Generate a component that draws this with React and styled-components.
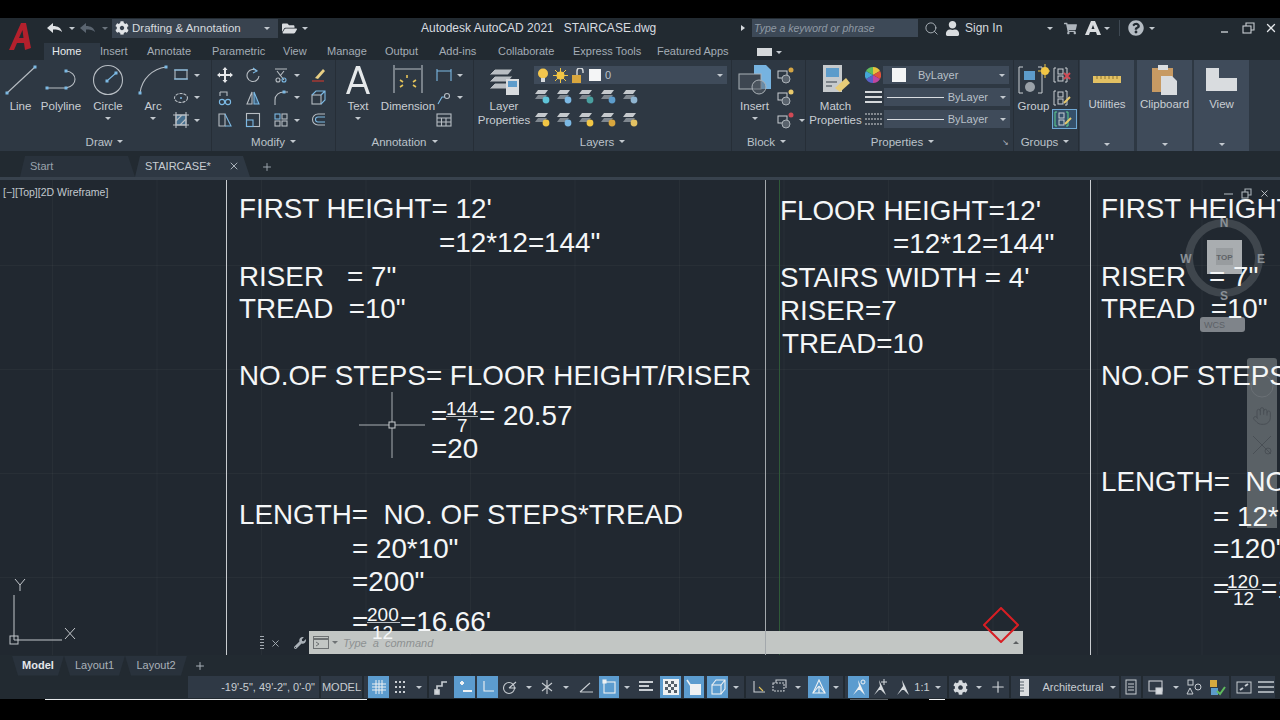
import React from "react";
import styled, { createGlobalStyle } from "styled-components";
import { FaCog, FaUser, FaShoppingCart, FaFolderOpen, FaQuestionCircle, FaWrench } from "react-icons/fa";
import { Search, X, Plus, Hand } from "lucide-react";

const GlobalStyle = createGlobalStyle`
  html, body { margin: 0; padding: 0; background: #000; }
  body { font-family: "Liberation Sans", Arial, sans-serif; width: 1280px; height: 720px; overflow: hidden; }
`;

const Screen = styled.div`
  width: 1280px;
  height: 720px;
  background: #000;
  padding-top: 18px;
  box-sizing: border-box;
  display: flex;
  flex-direction: column;
`;

/* ---- top bars ---- */
const Top = styled.div`
  display: flex;
  height: 42px;
  background: #222a31;
  flex: none;
`;
const LogoBox = styled.div`
  width: 44px;
  flex: none;
  padding: 4px 0 0 8px;
  box-sizing: border-box;
`;
const TopRows = styled.div`
  flex: 1;
  display: flex;
  flex-direction: column;
`;
const TitleRow = styled.div`
  height: 25px;
  padding-bottom: 5px;
  box-sizing: border-box;
  display: flex;
  align-items: center;
  white-space: nowrap;
  color: #d5d9dd;
  font-size: 12px;
`;
const Gap = styled.span`
  display: inline-block;
  flex: none;
  width: ${(p) => p.$w}px;
`;
const Caret = styled.span`
  display: inline-block;
  flex: none;
  width: 0;
  height: 0;
  border-left: 3px solid transparent;
  border-right: 3px solid transparent;
  border-top: 3px solid ${(p) => p.$c || "#c3c9cf"};
`;
const Workspace = styled.div`
  width: 166px;
  height: 19px;
  background: #39434f;
  display: flex;
  align-items: center;
  padding: 0 3px;
  box-sizing: border-box;
  font-size: 11.5px;
  gap: 3px;
  flex: none;
  color: #d6dade;
`;
const Grow = styled.span`
  flex: 1;
`;
const AppTitle = styled.div`
  width: 320px;
  flex: none;
  white-space: pre;
  font-size: 12px;
  color: #d8dce0;
`;
const SearchArrow = styled.span`
  width: 0;
  height: 0;
  flex: none;
  border-top: 3px solid transparent;
  border-bottom: 3px solid transparent;
  border-left: 4px solid #d5d9dd;
`;
const SepLine = styled.span`
  width: 1px;
  height: 16px;
  background: #3f4953;
  flex: none;
`;
const SearchBox = styled.div`
  width: 166px;
  height: 18px;
  background: #3d4957;
  color: #8f99a4;
  font-size: 10.5px;
  font-style: italic;
  line-height: 18px;
  padding-left: 2px;
  box-sizing: border-box;
  flex: none;
`;
const TabsRow = styled.div`
  height: 17px;
  display: flex;
  align-items: flex-end;
`;
const RibbonTab = styled.div`
  height: 17px;
  line-height: 16px;
  font-size: 11px;
  color: ${(p) => (p.$active ? "#e8ebee" : "#a4adb6")};
  background: ${(p) => (p.$active ? "#2e3843" : "transparent")};
  width: ${(p) => p.$w}px;
  padding-left: ${(p) => (p.$active ? 8 : 0)}px;
  box-sizing: border-box;
  flex: none;
`;
const MiniBox = styled.span`
  width: 15px;
  height: 8px;
  background: #d5d8da;
  margin: 0 4px 4px 0;
  flex: none;
`;
const TabCaret = styled(Caret)`
  margin-bottom: 6px;
`;

/* ---- ribbon ---- */
const Ribbon = styled.div`
  display: flex;
  height: 91px;
  background: #2e3843;
  padding-left: 2px;
  flex: none;
`;
const Panel = styled.div`
  width: ${(p) => p.$w}px;
  flex: none;
  display: flex;
  flex-direction: column;
  box-sizing: border-box;
  border-right: 1px solid #262e37;
  position: relative;
`;
const PanelBody = styled.div`
  flex: 1;
  display: flex;
  padding-top: 4px;
`;
const PanelTitle = styled.div`
  height: 18px;
  display: flex;
  align-items: center;
  justify-content: center;
  gap: 5px;
  color: #bcc3ca;
  font-size: 11.5px;
  padding: 0 ${(p) => p.$pr || 0}px 1px 0;
  box-sizing: border-box;
`;
const Launcher = styled.span`
  position: absolute;
  right: 4px;
  bottom: 4px;
  color: #b5bcc3;
  font-size: 8px;
  line-height: 8px;
`;
const BigButton = styled.div`
  width: ${(p) => p.$w}px;
  flex: none;
  display: flex;
  flex-direction: column;
  align-items: center;
  color: #c9ced3;
  font-size: 11.5px;
  line-height: 14px;
  text-align: center;
`;
const BigIcon = styled.div`
  height: 32px;
  margin-bottom: 3px;
  display: flex;
  align-items: center;
  justify-content: center;
`;
const BigCaret = styled(Caret)`
  margin-top: 4px;
`;
const SmallCol = styled.div`
  display: flex;
  flex-direction: column;
  width: ${(p) => p.$w}px;
  flex: none;
`;
const SmallGrid = styled.div`
  display: grid;
  grid-template-columns: ${(p) => p.$cols};
  grid-auto-rows: 22.5px;
  align-items: center;
  justify-items: start;
  flex: none;
`;
const SmallBtn = styled.div`
  display: flex;
  align-items: center;
  gap: 5px;
  height: 22.5px;
`;
const LayerColumn = styled.div`
  display: flex;
  flex-direction: column;
  flex: none;
  width: 193px;
  margin: 2px 0 0 0;
`;
const Combo = styled.div`
  height: 18px;
  background: #3f4b5a;
  display: flex;
  align-items: center;
  padding: 0 4px 0 3px;
  gap: 4px;
  color: #b9c0c8;
  font-size: 11px;
  box-sizing: border-box;
  margin-bottom: ${(p) => p.$mb || 0}px;
  flex: none;
  width: ${(p) => p.$w || "auto"};
`;
const Swatch = styled.span`
  width: ${(p) => p.$s}px;
  height: ${(p) => p.$s}px;
  background: #f4f5f6;
  flex: none;
`;
const LineSample = styled.span`
  flex: 1;
  height: 1px;
  background: #d8dce0;
`;
const PropRows = styled.div`
  display: flex;
  flex-direction: column;
  flex: none;
  padding-top: 2px;
`;
const PropRow = styled.div`
  display: flex;
  align-items: center;
  gap: 2px;
  margin-bottom: 4px;
`;
const PressedIcon = styled.div`
  background: #35506a;
  border: 1px solid #6fa8d4;
  display: flex;
  padding: 1px;
  margin-left: -1px;
`;
const Collapsed = styled.div`
  width: ${(p) => p.$w}px;
  margin-right: ${(p) => p.$mr}px;
  background: #3f4b5a;
  flex: none;
  display: flex;
  flex-direction: column;
  align-items: center;
  color: #c9ced3;
  font-size: 11.5px;
  padding-top: 4px;
  box-sizing: border-box;
`;
const CollapsedIcon = styled.div`
  height: 31px;
  display: flex;
  align-items: center;
  margin-bottom: 3px;
`;
const Bottom6 = styled.span`
  height: 5px;
  flex: none;
`;

/* ---- document tabs ---- */
const DocBar = styled.div`
  height: 29px;
  background: #222a31;
  border-bottom: 3px solid #38424d;
  box-sizing: border-box;
  display: flex;
  align-items: flex-end;
  padding-left: 20px;
  flex: none;
  color: #aab2ba;
  font-size: 11px;
`;
const DocTab = styled.div`
  width: 115px;
  height: 21px;
  flex: none;
  background: ${(p) => (p.$active ? "#2e3843" : "#29323c")};
  color: ${(p) => (p.$active ? "#c9ced3" : "#9aa3ac")};
  clip-path: polygon(5px 0, 108px 0, 115px 100%, 0 100%);
  display: flex;
  align-items: center;
  padding: 0 10px 2px;
  box-sizing: border-box;
  justify-content: space-between;
`;
const DocPlus = styled.div`
  margin: 0 0 4px 11px;
  display: flex;
`;

/* ---- drawing area ---- */
const Canvas = styled.div`
  position: relative;
  height: 475px;
  flex: none;
  overflow: hidden;
  background-color: #212830;
  background-image:
    linear-gradient(90deg, rgba(255, 255, 255, 0.03) 1px, transparent 1px),
    linear-gradient(rgba(255, 255, 255, 0.03) 1px, transparent 1px);
  background-size: 104.5px 104px;
  background-position: 52px 85px;
`;
const Rule = styled.div`
  position: absolute;
  top: 0;
  bottom: 0;
  left: ${(p) => p.$x}px;
  width: 1px;
  background: ${(p) => p.$c};
  z-index: ${(p) => p.$z || 0};
`;
const Note = styled.div`
  position: absolute;
  left: ${(p) => p.$x}px;
  top: ${(p) => p.$y + 1}px;
  transform: translateY(-50%);
  white-space: pre;
  font-size: ${(p) => p.$s || 27.8}px;
  line-height: 1;
  color: #f4f6f7;
  z-index: ${(p) => (p.$over ? 3 : 1)};
`;
const FracBar = styled.div`
  position: absolute;
  left: ${(p) => p.$x}px;
  top: ${(p) => p.$y}px;
  width: ${(p) => p.$w}px;
  height: 1px;
  background: #b9bec2;
`;
const ViewLabel = styled.div`
  position: absolute;
  left: 3px;
  top: 6px;
  color: #c2c8ce;
  font-size: 10.5px;
`;
const Cross = styled.svg`
  position: absolute;
  left: 359px;
  top: 212px;
`;
const Ucs = styled.svg`
  position: absolute;
  left: 8px;
  top: 399px;
`;
const Marker = styled.svg`
  position: absolute;
  left: 983px;
  top: 427px;
  z-index: 4;
`;
const WinControls = styled.div`
  position: absolute;
  top: 8px;
  right: 10px;
  display: flex;
  gap: 7px;
  align-items: center;
  color: #aab1b8;
  z-index: 5;
`;
const Cube = styled.svg`
  position: absolute;
  left: 1176px;
  top: 30px;
`;
const NavBar = styled.div`
  position: absolute;
  left: 1247px;
  top: 178px;
  width: 30px;
  height: 170px;
  background: #5a6166;
  border-radius: 3px 3px 0 0;
  display: flex;
  flex-direction: column;
  align-items: center;
  gap: 8px;
  padding-top: 16px;
  box-sizing: border-box;
  color: #494f55;
`;
const CommandTools = styled.div`
  position: absolute;
  left: 260px;
  top: 451px;
  height: 24px;
  display: flex;
  align-items: center;
  gap: 6px;
  color: #aab1b8;
  z-index: 2;
`;
const Grip = styled.span`
  width: 4px;
  height: 15px;
  background-image: repeating-linear-gradient(#a2a9b0 0 1px, transparent 1px 3px);
`;
const CommandLine = styled.div`
  position: absolute;
  left: 309px;
  top: 451px;
  width: 714px;
  height: 23px;
  background: #c2c6c4;
  display: flex;
  align-items: center;
  padding: 0 4px;
  box-sizing: border-box;
  gap: 3px;
  color: #8d9192;
  font-size: 11px;
  font-style: italic;
  z-index: 2;
`;
const CommandText = styled.span`
  white-space: pre;
  margin-left: 2px;
  flex: 1;
`;
const UpCaret = styled(Caret)`
  transform: rotate(180deg);
`;

/* ---- bottom ---- */
const LayoutBar = styled.div`
  height: 21px;
  background: #222a31;
  display: flex;
  align-items: center;
  padding-left: 12px;
  flex: none;
  font-size: 11px;
  color: #a9b1b9;
`;
const LayoutTab = styled.div`
  width: ${(p) => p.$w}px;
  height: 20px;
  flex: none;
  background: #29323c;
  text-align: center;
  line-height: 19px;
  font-weight: ${(p) => (p.$active ? 700 : 400)};
  color: ${(p) => (p.$active ? "#e4e7ea" : "#a9b1b9")};
  clip-path: polygon(0 0, 100% 0, calc(100% - 6px) 100%, 6px 100%);
`;
const StatusBar = styled.div`
  height: 23px;
  background: #222a31;
  display: flex;
  padding-left: 188px;
  gap: 2px;
  flex: none;
`;
const StatusGroup = styled.div`
  height: 22px;
  background: #2f3945;
  display: flex;
  align-items: center;
  flex: none;
  color: #c8cdd2;
  font-size: 11px;
`;
const Coords = styled(StatusGroup)`
  width: 131px;
  justify-content: flex-end;
  padding-right: 4px;
  box-sizing: border-box;
  white-space: pre;
`;
const StatusText = styled.div`
  width: ${(p) => p.$w}px;
  text-align: center;
  flex: none;
`;
const StatusBtn = styled.div`
  width: ${(p) => p.$w || 21}px;
  height: 22px;
  flex: none;
  display: flex;
  align-items: center;
  justify-content: center;
  background: ${(p) => (p.$on ? "#5c9ccf" : "transparent")};
`;
const BottomEdge = styled.div`
  height: 1px;
  display: flex;
  flex: none;
`;
const EdgeBit = styled.span`
  width: ${(p) => p.$w}px;
  background: ${(p) => p.$c};
  flex: none;
`;

/* ---- icons ---- */
const I = ({ w = 16, h = 16, vb, children, fill = "none", sc = "#b7bdc3", sw = 1.1 }) => (
  <svg width={w} height={h} viewBox={vb || `0 0 ${w} ${h}`} fill={fill} stroke={sc} strokeWidth={sw}>
    {children}
  </svg>
);
const BLUE = "#7cb9e4";
const Dot = ({ x, y }) => <rect x={x - 1.5} y={y - 1.5} width="3" height="3" fill={BLUE} stroke="none" />;

const Logo = () => (
  <svg width="24" height="30" viewBox="0 0 24 30">
    <path d="M1 28 L13 1 L18 1 L23 26 L17 28 L16 21 L9 21 L6 28 Z M11 16 L15.5 16 L14.5 8 Z" fill="#b3202c" fillRule="evenodd" />
  </svg>
);
const Undo = ({ c }) => (
  <svg width="16" height="11" viewBox="0 0 16 11"><path d="M0 5 L6 0 V3 C11 3 14 5 15 9 C13 7 10 6.5 6 6.5 V10 Z" fill={c} /></svg>
);
const TextSmallA = () => (
  <svg width="16" height="14" viewBox="0 0 16 14"><path d="M0 14 L6 0 H10 L16 14 H12 L11 11 H5 L4 14 Z M6.5 8 H9.5 L8 4 Z" fill="#d9dcdf" fillRule="evenodd" /></svg>
);
const LineI = () => <I w={32} h={32}><path d="M2 29 L30 3" /><Dot x={2} y={29} /><Dot x={30} y={3} /></I>;
const PolyI = () => <I w={34} h={24}><path d="M3 20 H22 C34 18 34 4 22 3" /><Dot x={3} y={20} /><Dot x={22} y={20} /><Dot x={22} y={3} /></I>;
const CircleI = () => <I w={32} h={32}><circle cx="16" cy="16" r="14.5" /><path d="M16 16 L24 9" stroke={BLUE} /><Dot x={15} y={17} /><Dot x={24} y={9} /></I>;
const ArcI = () => <I w={32} h={32}><path d="M3 29 C5 14 16 5 29 3" /><Dot x={3} y={29} /><Dot x={29} y={3} /></I>;
const RectI = () => <I><rect x="2" y="3" width="12" height="9" /><path d="M1 3 H15 M1 12 H15" stroke={BLUE} /></I>;
const EllipseI = () => <I><ellipse cx="8" cy="8" rx="6.5" ry="4.5" strokeDasharray="3 1" /><circle cx="8" cy="8" r="1" fill={BLUE} stroke="none" /></I>;
const HatchI = () => <I><rect x="3" y="3" width="10" height="10" fill="#47708f" /><path d="M3 9 L9 3 M7 13 L13 7 M0 3 H16 M0 13 H16 M3 0 V16 M13 0 V16" /></I>;
const MoveI = () => <I sc="#e6e8ea" sw={2}><path d="M8 1 V15 M1 8 H15" /><path d="M8 0 L5.5 3 H10.5Z M8 16 L5.5 13 H10.5Z M0 8 L3 5.5 V10.5Z M16 8 L13 5.5 V10.5Z" fill="#e6e8ea" stroke="none" /></I>;
const RotateI = () => <I><path d="M12 4 A6 6 0 1 0 14 9" /><path d="M8 1 L12 4 L8 6" stroke={BLUE} /></I>;
const TrimI = () => <I><path d="M2 2 H14 M4 4 L11 13 M11 4 L7 9" /><circle cx="5" cy="13" r="2" /><circle cx="11" cy="13" r="2" stroke={BLUE} /></I>;
const EraseI = () => <I><path d="M2 14 H14" stroke="#d0392e" /><path d="M5 11 L13 2 L15 4 L8 12 Z" fill="#e8cf84" stroke="none" /></I>;
const CopyI = () => <I><path d="M3 2 H10 V6 M3 2 V6" /><circle cx="5" cy="12" r="2.6" stroke={BLUE} /><circle cx="11" cy="12" r="2.6" stroke={BLUE} /></I>;
const MirrorI = () => <I><path d="M7 2 L2 14 H7Z" /><path d="M9 2 L14 14 H9Z" stroke={BLUE} fill="#3c5f7c" /></I>;
const FilletI = () => <I><path d="M2 15 V10 C2 5 6 2 11 2 H15" /><Dot x={11} y={2} /></I>;
const BoxI = () => <I><rect x="2" y="5" width="9" height="9" /><path d="M2 5 L6 1 H15 V10 L11 14 M11 5 L15 1" stroke={BLUE} /></I>;
const StretchI = () => <I><path d="M2 2 H8 V14 H2Z" /><path d="M8 2 L14 14 H8" stroke={BLUE} /></I>;
const ScaleI = () => <I><rect x="1.5" y="1.5" width="13" height="13" /><rect x="1.5" y="8" width="6.5" height="6.5" stroke={BLUE} /></I>;
const ArrayI = () => <I><rect x="2" y="2" width="5" height="5" stroke={BLUE} /><rect x="9" y="2" width="5" height="5" /><rect x="2" y="9" width="5" height="5" /><rect x="9" y="9" width="5" height="5" /></I>;
const OffsetI = () => <I><path d="M15 2 H8 A5.5 5.5 0 0 0 8 13 H15" /><path d="M15 5 H8 A2.5 2.5 0 0 0 8 10 H15" stroke={BLUE} /></I>;
const DimLinI = () => <I><path d="M1 2 V14 M15 2 V14 M1 4 H15" stroke={BLUE} /></I>;
const LeaderI = () => <I><path d="M2 14 L6 7 H9" stroke={BLUE} /><circle cx="11" cy="6" r="2.5" /></I>;
const TableI = () => <I><rect x="1" y="2" width="14" height="12" /><path d="M1 6 H15 M1 10 H15 M5.5 6 V14 M10 6 V14" /></I>;
const TextA = () => <svg width="26" height="30" viewBox="0 0 26 30"><path d="M1 29 L11 1 H15 L25 29 H21.5 L19 22 H7 L4.5 29 Z M8 19 H18 L13 5 Z" fill="#e5e8ea" fillRule="evenodd" /></svg>;
const DimI = () => (
  <I w={32} h={32}>
    <path d="M2 1 V29 M30 1 V29 M3 5 H29" />
    <path d="M11 18 L8 16 M15 14 V11 M21 18 L24 16 M8 23 L11 21 M24 23 L21 21" stroke="#e5c45a" strokeWidth="1.6" />
  </I>
);
const LayerStack = () => (
  <svg width="32" height="30" viewBox="0 0 32 30">
    {[4, 11, 18].map((y) => <path key={y} d={`M7 ${y} H25 L20 ${y + 6} H1 Z`} fill="#b9bec3" stroke="#2e3843" />)}
    <rect x="18" y="14" width="13" height="16" fill="#d9dcdf" />
    <rect x="20" y="16" width="9" height="6" fill="#5d9ccb" />
  </svg>
);
const MiniLayer = ({ a, b = "#c5c9cd" }) => (
  <svg width="18" height="16" viewBox="0 0 18 16">
    <path d="M4 1 H14 L11 5 H1Z" fill={b} />
    <path d="M4 6 H13 L10 10 H1Z" fill="#7f878f" />
    <circle cx="12" cy="11" r="3.4" fill={a} />
  </svg>
);
const Bulb = () => <svg width="12" height="15" viewBox="0 0 12 15"><circle cx="6" cy="5.5" r="5" fill="#f4c64d" /><rect x="4" y="10" width="4" height="4" fill="#d5d8db" /></svg>;
const Sun = () => <svg width="15" height="15" viewBox="0 0 15 15"><circle cx="7.5" cy="7.5" r="4" fill="#f2c645" /><path d="M7.5 0 V15 M0 7.5 H15 M2 2 L13 13 M13 2 L2 13" stroke="#f2c645" /></svg>;
const Lock = () => <svg width="13" height="15" viewBox="0 0 13 15"><rect x="0" y="7" width="9" height="8" fill="#d8a63e" /><path d="M5 7 V3 A3 3 0 0 1 11 3 V5" stroke="#d8dadc" strokeWidth="1.4" fill="none" /></svg>;
const InsertI = () => (
  <svg width="34" height="30" viewBox="0 0 34 30">
    <path d="M16 0 H28 L33 5 V24 H16Z" fill="#76b3e0" />
    <rect x="1" y="9" width="22" height="15" fill="#3d4651" stroke="#aab1b7" />
    <circle cx="21" cy="22" r="7" fill="#59626c" stroke="#aab1b7" fillOpacity=".5" />
  </svg>
);
const BlockSmall = ({ c = "#d4a545" }) => (
  <svg width="17" height="17" viewBox="0 0 17 17">
    <rect x="1" y="4" width="9" height="7" fill="none" stroke="#c9ced3" />
    <circle cx="9" cy="12" r="4" fill="#59626c" stroke="#aab1b7" />
    <circle cx="14" cy="3" r="2.5" fill={c} />
  </svg>
);
const MatchI = () => (
  <svg width="32" height="32" viewBox="0 0 32 32">
    <rect x="3" y="1" width="19" height="27" fill="#c6cacd" />
    <rect x="6" y="4" width="13" height="9" fill="#5d9ccb" />
    <path d="M6 18 H17 M6 22 H12" stroke="#656d75" strokeWidth="1.5" />
    <path d="M15 24 L26 14 L30 19 L20 28Z" fill="#e9cd78" />
  </svg>
);
const Wheel = () => (
  <svg width="16" height="16" viewBox="0 0 16 16">
    <path d="M8 8 L8 0 A8 8 0 0 1 15 4Z" fill="#e8c23c" />
    <path d="M8 8 L15 4 A8 8 0 0 1 15 12Z" fill="#e2533b" />
    <path d="M8 8 L15 12 A8 8 0 0 1 8 16Z" fill="#c046a0" />
    <path d="M8 8 L8 16 A8 8 0 0 1 1 12Z" fill="#5a60c8" />
    <path d="M8 8 L1 12 A8 8 0 0 1 1 4Z" fill="#45a6d8" />
    <path d="M8 8 L1 4 A8 8 0 0 1 8 0Z" fill="#5fbb5e" />
  </svg>
);
const Weights = ({ dashed }) => (
  <I w={17} h={16} sc="#d5d8db" sw={dashed ? 1 : 2}>
    <path d="M0 3 H17 M0 8 H17 M0 13 H17" strokeDasharray={dashed ? "2 1" : undefined} />
  </I>
);
const GroupI = () => (
  <svg width="32" height="32" viewBox="0 0 32 32">
    <path d="M5 3 H1 V29 H5 M20 3 H24 V29 H20" stroke="#c9ced3" fill="none" />
    <rect x="6" y="7" width="11" height="9" fill="#5d9ccb" />
    <circle cx="12" cy="23" r="5" fill="#9aa1a8" />
    <circle cx="27" cy="7" r="4" fill="#f2c645" />
    <path d="M27 0 V14 M20 7 H32" stroke="#f2c645" />
  </svg>
);
const Bracket = ({ mark, stroke = "#c9ced3" }) => (
  <svg width="18" height="16" viewBox="0 0 18 16">
    <path d="M3 1 H1 V15 H3 M12 1 H14 V15 H12" stroke={stroke} fill="none" />
    <rect x="5" y="2" width="5" height="5" fill="none" stroke="#c9ced3" />
    <rect x="5" y="9" width="5" height="5" fill="none" stroke="#c9ced3" />
    <path d={mark === "x" ? "M11 6 L17 12 M17 6 L11 12" : "M11 13 L17 7"} stroke={mark === "x" ? "#d04a55" : "#e8c96c"} strokeWidth="2" />
  </svg>
);
const Ruler = () => <svg width="28" height="8" viewBox="0 0 28 8"><rect width="28" height="7" fill="#e3c163" /><path d="M4 0 V3 M8 0 V3 M12 0 V3 M16 0 V3 M20 0 V3 M24 0 V3" stroke="#8d7430" /></svg>;
const Clip = () => (
  <svg width="26" height="30" viewBox="0 0 26 30">
    <rect x="0" y="3" width="21" height="24" fill="#c79a63" />
    <rect x="6" y="0" width="10" height="5" fill="#d9dcdf" />
    <path d="M9 11 H20 L25 16 V30 H9Z" fill="#d9dcdf" />
  </svg>
);
const ViewI = () => <svg width="32" height="24" viewBox="0 0 32 24"><path d="M0 0 H13 V10 H31 V23 H0Z" fill="#d9dcdf" /></svg>;

const SI = ({ children, w = 16, h = 16, sc = "#c8cdd2", sw = 1.1 }) => <I w={w} h={h} sc={sc} sw={sw}>{children}</I>;
const Person = ({ c, extra }) => (
  <svg width="16" height="18" viewBox="0 0 16 18">
    <path d="M7 2 L8 8 L2 17 L7 12 L9 12 L14 17 L10 8Z" fill={c} />
    {extra}
  </svg>
);

const caretGap = <Caret />;

const Draw = () => (
  <Panel $w={210}>
    <PanelBody>
      <BigButton $w={37}><BigIcon><LineI /></BigIcon>Line</BigButton>
      <BigButton $w={44}><BigIcon><PolyI /></BigIcon>Polyline</BigButton>
      <BigButton $w={50}><BigIcon><CircleI /></BigIcon>Circle<BigCaret /></BigButton>
      <BigButton $w={40}><BigIcon><ArcI /></BigIcon>Arc<BigCaret /></BigButton>
      <SmallCol $w={36}>
        <SmallBtn><RectI />{caretGap}</SmallBtn>
        <SmallBtn><EllipseI />{caretGap}</SmallBtn>
        <SmallBtn><HatchI />{caretGap}</SmallBtn>
      </SmallCol>
    </PanelBody>
    <PanelTitle $pr={4}>Draw <Caret /></PanelTitle>
  </Panel>
);

const Modify = () => (
  <Panel $w={124}>
    <PanelBody>
      <Gap $w={5} />
      <SmallGrid $cols="28px 28px 37px 20px">
        <MoveI /><RotateI /><SmallBtn><TrimI />{caretGap}</SmallBtn><EraseI />
        <CopyI /><MirrorI /><SmallBtn><FilletI />{caretGap}</SmallBtn><BoxI />
        <StretchI /><ScaleI /><SmallBtn><ArrayI />{caretGap}</SmallBtn><OffsetI />
      </SmallGrid>
    </PanelBody>
    <PanelTitle>Modify <Caret /></PanelTitle>
  </Panel>
);

const Annotation = () => (
  <Panel $w={138}>
    <PanelBody>
      <BigButton $w={44}><BigIcon><TextA /></BigIcon>Text<BigCaret /></BigButton>
      <BigButton $w={56}><BigIcon><DimI /></BigIcon>Dimension</BigButton>
      <SmallCol $w={30}>
        <SmallBtn><DimLinI />{caretGap}</SmallBtn>
        <SmallBtn><LeaderI />{caretGap}</SmallBtn>
        <SmallBtn><TableI /></SmallBtn>
      </SmallCol>
    </PanelBody>
    <PanelTitle>Annotation <Caret /></PanelTitle>
  </Panel>
);

const Layers = () => (
  <Panel $w={258}>
    <PanelBody>
      <BigButton $w={60}><BigIcon><LayerStack /></BigIcon>Layer<br />Properties</BigButton>
      <LayerColumn>
        <Combo $mb={2}>
          <Bulb /><Sun /><Lock /><Swatch $s={12} />0<Grow /><Caret />
        </Combo>
        <SmallGrid $cols="repeat(5, 22px)">
          <MiniLayer a="#5fc4d8" /><MiniLayer a="#7cb9e4" /><MiniLayer a="#4aa0a0" /><MiniLayer a="#5d9ccb" /><MiniLayer a="#8fb4d0" />
          <MiniLayer a="#f2c645" /><MiniLayer a="#7cb9e4" /><MiniLayer a="#f2c645" /><MiniLayer a="#d8a63e" /><MiniLayer a="#e3c163" />
        </SmallGrid>
      </LayerColumn>
    </PanelBody>
    <PanelTitle>Layers <Caret /></PanelTitle>
  </Panel>
);

const Block = () => (
  <Panel $w={74}>
    <PanelBody>
      <BigButton $w={45}><BigIcon><InsertI /></BigIcon>Insert<BigCaret /></BigButton>
      <SmallCol $w={28}>
        <SmallBtn><BlockSmall /></SmallBtn>
        <SmallBtn><BlockSmall c="#e8c96c" /></SmallBtn>
        <SmallBtn><BlockSmall c="#d04a55" />{caretGap}</SmallBtn>
      </SmallCol>
    </PanelBody>
    <PanelTitle $pr={4}>Block <Caret /></PanelTitle>
  </Panel>
);

const Properties = () => (
  <Panel $w={208}>
    <PanelBody>
      <BigButton $w={59}><BigIcon><MatchI /></BigIcon>Match<br />Properties</BigButton>
      <PropRows>
        <PropRow><Wheel /><Combo $w="126px"><Gap $w={2} /><Swatch $s={14} /><Gap $w={4} />ByLayer<Grow /><Caret /></Combo></PropRow>
        <PropRow><Weights /><Combo $w="126px"><LineSample />ByLayer<Gap $w={4} /><Caret /></Combo></PropRow>
        <PropRow><Weights dashed /><Combo $w="126px"><LineSample />ByLayer<Gap $w={4} /><Caret /></Combo></PropRow>
      </PropRows>
    </PanelBody>
    <PanelTitle $pr={14}>Properties <Caret /></PanelTitle>
    <Launcher>↘</Launcher>
  </Panel>
);

const Groups = () => (
  <Panel $w={65}>
    <PanelBody>
      <BigButton $w={39}><BigIcon><GroupI /></BigIcon>Group</BigButton>
      <SmallCol $w={24}>
        <SmallBtn><Bracket mark="x" /></SmallBtn>
        <SmallBtn><Bracket /></SmallBtn>
        <PressedIcon><Bracket stroke="#5fd08e" /></PressedIcon>
      </SmallCol>
    </PanelBody>
    <PanelTitle $pr={2}>Groups <Caret /></PanelTitle>
  </Panel>
);

const CollapsedPanel = ({ w, mr, icon, label }) => (
  <Collapsed $w={w} $mr={mr}>
    <CollapsedIcon>{icon}</CollapsedIcon>
    {label}
    <Grow />
    <Caret />
    <Bottom6 />
  </Collapsed>
);

const notes = [
  ["FIRST HEIGHT= 12'", 239, 28], ["=12*12=144\"", 439, 62], ["RISER   = 7\"", 239, 96],
  ["TREAD  =10\"", 239, 128], ["NO.OF STEPS= FLOOR HEIGHT/RISER", 239, 195],
  ["=", 431, 235], ["= 20.57", 479, 235], ["=20", 431, 268],
  ["LENGTH=  NO. OF STEPS*TREAD", 239, 334], ["= 20*10\"", 352, 368], ["=200\"", 352, 401],
  ["=", 352, 441], ["=16.66'", 400, 441],
  ["FLOOR HEIGHT=12'", 780, 30], ["=12*12=144\"", 893, 63], ["STAIRS WIDTH = 4'", 780, 97],
  ["RISER=7", 780, 130], ["TREAD=10", 782, 163],
  ["FIRST HEIGHT", 1101, 28], ["RISER   = 7\"", 1101, 96], ["TREAD  =10\"", 1101, 128],
  ["NO.OF STEPS", 1101, 195], ["LENGTH=  NO", 1101, 301], ["= 12*", 1213, 336], ["=120'", 1213, 368],
  ["=", 1213, 408], ["=1", 1261, 408],
];
const fractions = [
  ["144", 446, 227], ["7", 457, 244], ["200", 367, 433], ["120", 1227, 400], ["12", 1233, 417],
];

const ViewCube = () => (
  <Cube width="96" height="124" viewBox="0 0 96 124">
    <circle cx="48" cy="48" r="35" fill="none" stroke="#3f464d" strokeWidth="8" />
    <rect x="31" y="30" width="35" height="34" fill="#a9adb0" />
    <rect x="40" y="38" width="17" height="17" fill="#989c9f" />
    <text x="48.5" y="50" textAnchor="middle" fontSize="8" fontWeight="700" fill="#5f6367" fontFamily="Liberation Sans">TOP</text>
    <g fontSize="12" fontWeight="700" fill="#8b9197" fontFamily="Liberation Sans" textAnchor="middle">
      <text x="48" y="17">N</text>
      <text x="10" y="53">W</text>
      <text x="85" y="53">E</text>
      <text x="48" y="90">S</text>
    </g>
    <rect x="24" y="107" width="45" height="15" rx="3" fill="#7f848a" />
    <text x="28" y="118" fontSize="9" fill="#5c6167" fontFamily="Liberation Sans">WCS</text>
  </Cube>
);

const Status = () => (
  <StatusBar>
    <Coords>-19'-5", 49'-2", 0'-0"</Coords>
    <StatusGroup><StatusText $w={41}>MODEL</StatusText></StatusGroup>
    <StatusGroup>
      <Gap $w={4} />
      <StatusBtn $on><SI sc="#eef1f3" sw={1}><path d="M1 5 H15 M1 8 H15 M1 11 H15 M5 1 V15 M8 1 V15 M11 1 V15" /></SI></StatusBtn>
      <StatusBtn $w={22}><SI sw={2}><path d="M3 3 H13 M3 8 H13 M3 13 H13" strokeDasharray="2 2" /></SI></StatusBtn>
      <StatusBtn $w={16}><Caret /></StatusBtn>
    </StatusGroup>
    <StatusGroup>
      <StatusBtn $w={24}><SI sw={1.6}><path d="M4 13 V7 H9 V3 H14" /><rect x="2" y="11" width="4" height="4" fill="#d6dade" /></SI></StatusBtn>
      <Gap $w={1} />
      <StatusBtn $on><SI sc="#eef1f3" sw={2}><path d="M3 4 H7 M5 2 V6 M6 12 H15" /></SI></StatusBtn>
      <Gap $w={2} />
      <StatusBtn $on><SI sc="#eef1f3"><path d="M4 2 V12 H14" /></SI></StatusBtn>
      <StatusBtn $w={22}><SI><circle cx="8" cy="9" r="5.5" /><path d="M8 9 L15 3 M8 9 H15" /></SI></StatusBtn>
      <StatusBtn $w={18}><Caret /></StatusBtn>
      <StatusBtn $w={18}><SI><path d="M8 1 V15 M3 4 L13 12 M13 4 L3 12" /></SI></StatusBtn>
      <StatusBtn $w={20}><Caret /></StatusBtn>
      <StatusBtn $w={20}><SI><path d="M2 13 H15 M2 13 L12 4" /></SI></StatusBtn>
      <Gap $w={3} />
      <StatusBtn $on $w={20}><SI sc="#eef1f3"><rect x="3" y="3" width="11" height="11" /><rect x="2" y="1" width="3" height="3" fill="#eef1f3" /></SI></StatusBtn>
      <StatusBtn $w={16}><Caret /></StatusBtn>
      <StatusBtn $w={22}><SI sw={1.8}><path d="M1 3 H15 M1 7 H11 M1 11 H15" /></SI></StatusBtn>
      <Gap $w={3} />
      <StatusBtn $on><svg width="16" height="16" viewBox="0 0 16 16"><rect width="16" height="16" fill="#eef1f3" /><path d="M2 2 H5 V5 H2Z M8 2 H11 V5 H8Z M5 5 H8 V8 H5Z M11 5 H14 V8 H11Z M2 8 H5 V11 H2Z M8 8 H11 V11 H8Z M5 11 H8 V14 H5Z M11 11 H14 V14 H11Z" fill="#55606b" /></svg></StatusBtn>
      <Gap $w={3} />
      <StatusBtn $on $w={20}><svg width="16" height="16" viewBox="0 0 16 16"><rect x="4" y="5" width="11" height="11" fill="#eef1f3" /><path d="M1 1 L5 7" stroke="#eef1f3" strokeWidth="1.5" /></svg></StatusBtn>
      <Gap $w={3} />
      <StatusBtn $on><SI sc="#eef1f3"><rect x="2" y="6" width="9" height="9" /><path d="M2 6 L6 1 H15 V10 L11 15 M11 6 L15 1" /></SI></StatusBtn>
      <StatusBtn $w={16}><Caret /></StatusBtn>
    </StatusGroup>
    <StatusGroup>
      <StatusBtn $w={24}><SI><path d="M4 2 V13 H15" /><path d="M9 8 L13 12" stroke="#e5c45a" /></SI></StatusBtn>
      <StatusBtn $w={18}><SI><rect x="2" y="4" width="11" height="8" strokeDasharray="2 1" /><path d="M5 4 V1 H15 V9" /></SI></StatusBtn>
      <StatusBtn $w={20}><Caret /></StatusBtn>
      <StatusBtn $on><SI sc="#eef1f3"><path d="M8 1 L14 14 H2Z" /><path d="M8 7 V14 M8 7 L14 14 M8 7 L2 14" /></SI></StatusBtn>
      <StatusBtn $w={14}><Caret /></StatusBtn>
    </StatusGroup>
    <StatusGroup>
      <Gap $w={3} />
      <StatusBtn $on><Person c="#eef1f3" extra={<circle cx="12" cy="4" r="2" fill="none" stroke="#eef1f3" />} /></StatusBtn>
      <StatusBtn $w={22}><Person c="#d6dade" extra={<path d="M12 1 V7 M9 4 H15" stroke="#d6dade" />} /></StatusBtn>
      <StatusBtn $w={24}><Person c="#d6dade" /></StatusBtn>
      <StatusBtn $w={14}>1:1</StatusBtn>
      <StatusBtn $w={18}><Caret /></StatusBtn>
    </StatusGroup>
    <StatusGroup>
      <StatusBtn $w={22}><FaCog size={15} color="#d6dade" /></StatusBtn>
      <StatusBtn $w={16}><Caret /></StatusBtn>
      <StatusBtn $w={22}><Plus size={18} color="#d6dade" strokeWidth={1.5} /></StatusBtn>
    </StatusGroup>
    <StatusGroup>
      <StatusBtn $w={26}><svg width="9" height="17" viewBox="0 0 9 17"><rect width="9" height="17" fill="#d9dcdf" /><path d="M0 3 H4 M0 6 H4 M0 9 H4 M0 12 H4" stroke="#55606b" /></svg></StatusBtn>
      <Gap $w={3} />
      <StatusText $w={66}>Architectural</StatusText>
      <StatusBtn $w={13}><Caret /></StatusBtn>
    </StatusGroup>
    <StatusGroup><StatusBtn $w={20}><SI sw={1}><rect x="3" y="1" width="10" height="14" /><path d="M5 5 H11 M5 8 H11 M5 11 H11" /></SI></StatusBtn></StatusGroup>
    <StatusGroup>
      <StatusBtn $w={26}><SI><rect x="1" y="2" width="13" height="10" /><rect x="8" y="9" width="6" height="6" fill="#d6dade" /></SI></StatusBtn>
      <StatusBtn $w={14}><Caret /></StatusBtn>
      <StatusBtn $w={22}><SI sw={1}><rect x="2" y="1" width="5" height="5" /><circle cx="12" cy="8" r="3" /><path d="M4 9 L7 15 H1Z" /></SI></StatusBtn>
      <StatusBtn $w={24}><svg width="17" height="17" viewBox="0 0 17 17"><rect x="1" y="1" width="7" height="7" fill="#d6a93f" /><rect x="2" y="9" width="7" height="7" fill="#5d9ccb" /><path d="M8 12 L11 15 L16 8" stroke="#5fbb5e" strokeWidth="2" fill="none" /></svg></StatusBtn>
    </StatusGroup>
    <StatusGroup>
      <StatusBtn $w={26}><SI sw={1}><rect x="1" y="3" width="14" height="11" /><path d="M9 7 L12 5 M4 11 L7 9" strokeWidth="2" /></SI></StatusBtn>
      <StatusBtn $w={18}><SI sw={1.6}><path d="M0 3 H16 M0 8 H16 M0 13 H16" /></SI></StatusBtn>
    </StatusGroup>
  </StatusBar>
);

export default function App() {
  return (
    <Screen>
      <GlobalStyle />
      <Top>
        <LogoBox><Logo /></LogoBox>
        <TopRows>
          <TitleRow>
            <Gap $w={3} /><Undo c="#dfe2e5" /><Gap $w={6} /><Caret /><Gap $w={5} /><Undo c="#5b6570" /><Gap $w={6} /><Caret $c="#6b747d" /><Gap $w={4} />
            <Workspace>
              <FaCog size={14} color="#e2e5e8" />
              Drafting &amp; Annotation
              <Grow /><Caret />
              <Gap $w={2} />
            </Workspace>
            <Gap $w={4} />
            <FaFolderOpen size={15} color="#d9dcdf" />
            <Gap $w={5} />
            <Caret />
            <Gap $w={113} />
            <AppTitle>Autodesk AutoCAD 2021   STAIRCASE.dwg</AppTitle>
            <SearchArrow />
            <Gap $w={7} />
            <SearchBox>Type a keyword or phrase</SearchBox>
            <Gap $w={6} />
            <Search size={15} color="#aeb5bc" strokeWidth={1.5} />
            <Gap $w={6} />
            <FaUser size={15} color="#d9dcdf" />
            <Gap $w={5} />
            Sign In
            <Gap $w={45} />
            <Caret />
            <Gap $w={11} />
            <FaShoppingCart size={13} color="#aeb5bc" />
            <Gap $w={8} />
            <TextSmallA />
            <Gap $w={3} />
            <Caret />
            <Gap $w={9} />
            <SepLine />
            <Gap $w={8} />
            <FaQuestionCircle size={16} color="#b5bcc3" />
            <Gap $w={5} />
            <Caret />
            <Gap $w={65} />
            <SI w={10} h={10} sw={1.4}><path d="M1 9 H8" /></SI>
            <Gap $w={12} />
            <SI w={13} h={12}><rect x="1" y="4" width="8" height="7" /><path d="M4 4 V1 H12 V8 H9" /></SI>
            <Gap $w={9} />
            <X size={14} color="#e4e7ea" strokeWidth={2.2} />
          </TitleRow>
          <TabsRow>
            <RibbonTab $active $w={56}>Home</RibbonTab>
            <RibbonTab $w={47}>Insert</RibbonTab>
            <RibbonTab $w={65}>Annotate</RibbonTab>
            <RibbonTab $w={71}>Parametric</RibbonTab>
            <RibbonTab $w={44}>View</RibbonTab>
            <RibbonTab $w={58}>Manage</RibbonTab>
            <RibbonTab $w={54}>Output</RibbonTab>
            <RibbonTab $w={59}>Add-ins</RibbonTab>
            <RibbonTab $w={75}>Collaborate</RibbonTab>
            <RibbonTab $w={84}>Express Tools</RibbonTab>
            <RibbonTab $w={100}>Featured Apps</RibbonTab>
            <MiniBox />
            <TabCaret />
          </TabsRow>
        </TopRows>
      </Top>
      <Ribbon>
        <Draw />
        <Modify />
        <Annotation />
        <Layers />
        <Block />
        <Properties />
        <Groups />
        <Gap $w={1} />
        <CollapsedPanel w={54} mr={3} icon={<Ruler />} label="Utilities" />
        <CollapsedPanel w={55} mr={2} icon={<Clip />} label="Clipboard" />
        <CollapsedPanel w={55} mr={0} icon={<ViewI />} label="View" />
      </Ribbon>
      <DocBar>
        <DocTab>Start</DocTab>
        <DocTab $active>STAIRCASE*<X size={12} strokeWidth={2} color="#aab2ba" /></DocTab>
        <DocPlus><Plus size={12} strokeWidth={2} color="#9aa3ac" /></DocPlus>
      </DocBar>
      <Canvas>
        <Rule $x={226} $c="#c9cdd0" />
        <Rule $x={765} $c="#a3a8ac" $z={3} />
        <Rule $x={779} $c="#2f5a38" />
        <Rule $x={1090} $c="#c9cdd0" />
        <ViewLabel>[−][Top][2D Wireframe]</ViewLabel>
        <ViewCube />
        <NavBar>
          <svg width="24" height="24" viewBox="0 0 24 24"><circle cx="12" cy="12" r="11" fill="none" stroke="#6a7075" /></svg>
          <Hand size={20} strokeWidth={1.2} />
          <svg width="22" height="22" viewBox="0 0 22 22"><path d="M2 2 L20 20 M20 2 L2 20" fill="none" stroke="#494f55" /><circle cx="17" cy="17" r="3" fill="none" stroke="#494f55" /></svg>
        </NavBar>
        {notes.map(([t, x, y]) => <Note key={t + x + y} $x={x} $y={y}>{t}</Note>)}
        {fractions.map(([t, x, y]) => <Note key={t + x} $x={x} $y={y} $s={19}>{t}</Note>)}
        <Note $x={372} $y={451} $s={19} $over>12</Note>
        <FracBar $x={446} $y={236} $w={32} />
        <FracBar $x={367} $y={442} $w={33} />
        <FracBar $x={1227} $y={409} $w={34} />
        <Cross width="66" height="66" viewBox="0 0 66 66">
          <path d="M33 0 V66 M0 33 H66" stroke="#a9aeb2" />
          <rect x="30" y="30" width="6" height="6" fill="#212830" stroke="#c9cdd0" />
        </Cross>
        <Ucs width="72" height="66" viewBox="0 0 72 66">
          <path d="M6 16 V61 H54" fill="none" stroke="#c2c6ca" />
          <rect x="2" y="57" width="8" height="8" fill="none" stroke="#c2c6ca" />
          <path d="M57 49 L67 60 M67 49 L57 60" stroke="#c2c6ca" />
          <path d="M7 0 L12 6 L17 0 M12 6 V12" stroke="#c2c6ca" fill="none" />
        </Ucs>
        <Marker width="36" height="36" viewBox="0 0 36 36">
          <path d="M18 1 L35 18 L18 35 L1 18 Z" fill="none" stroke="#d81e24" strokeWidth="2" />
        </Marker>
        <WinControls>
          <SI w={11} h={11} sc="#aab1b8"><path d="M1 6 H10" /></SI>
          <SI w={11} h={11} sc="#aab1b8"><rect x="1" y="4" width="6" height="6" /><path d="M4 4 V1 H10 V7 H7" /></SI>
          <X size={11} color="#c4c9ce" strokeWidth={2} />
        </WinControls>
        <CommandTools>
          <Grip />
          <X size={11} strokeWidth={2} />
          <Gap $w={1} />
          <FaWrench size={12} />
        </CommandTools>
        <CommandLine>
          <svg width="16" height="13" viewBox="0 0 16 13"><rect x="0.5" y="0.5" width="15" height="12" fill="none" stroke="#6e7274" /><path d="M0 3 H16" stroke="#6e7274" strokeWidth="2" /><path d="M3 6 L6 8 L3 10" stroke="#6e7274" fill="none" /></svg>
          <Caret $c="#6e7274" />
          <CommandText>Type  a  command</CommandText>
          <UpCaret $c="#5c6062" />
        </CommandLine>
      </Canvas>
      <LayoutBar>
        <LayoutTab $active $w={52}>Model</LayoutTab>
        <LayoutTab $w={61}>Layout1</LayoutTab>
        <LayoutTab $w={62}>Layout2</LayoutTab>
        <Gap $w={7} />
        <Plus size={12} strokeWidth={2} color="#a9b1b9" />
      </LayoutBar>
      <Status />
      <BottomEdge>
        <EdgeBit $w={45} $c="#000" />
        <EdgeBit $w={322} $c="#e8eaec" />
        <EdgeBit $w={483} $c="#000" />
        <EdgeBit $w={38} $c="#5a5f63" />
        <EdgeBit $w={41} $c="#000" />
        <EdgeBit $w={16} $c="#f0f1f2" />
      </BottomEdge>
    </Screen>
  );
}
